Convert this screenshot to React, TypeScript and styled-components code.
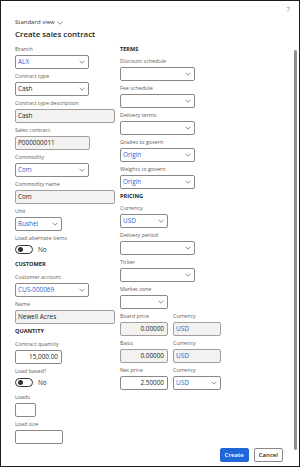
import React from "react";
import styled, { createGlobalStyle } from "styled-components";

const GlobalStyle = createGlobalStyle`
  body {
    margin: 0;
    font-family: "Open Sans", "Noto Sans", sans-serif;
    background: #ffffff;
  }
`;

const Dialog = styled.div`
  width: 300px;
  height: 467px;
  box-sizing: border-box;
  border: 1px solid #1b1b1b;
  background: #ffffff;
  position: relative;
  display: flex;
  flex-direction: column;
  overflow: hidden;
  color: #323130;
`;

const TopBar = styled.div`
  height: 15px;
  display: flex;
  justify-content: flex-end;
  padding-right: 9px;
`;

const Help = styled.span`
  font-size: 8px;
  line-height: 15px;
  color: #8a8886;
`;

const ViewSwitch = styled.div`
  margin: 2px 0 0 14px;
  height: 9px;
  font-size: 6px;
  line-height: 9px;
  color: #323130;
  display: flex;
  align-items: center;
  gap: 2px;
`;

const Title = styled.h1`
  margin: 1px 0 0 14px;
  font-size: 7.9px;
  line-height: 12px;
  font-weight: 600;
  color: #201f1e;
`;

const Form = styled.div`
  display: flex;
  margin-top: 5px;
  padding-left: 14px;
`;

const Column = styled.div<{ $width: number }>`
  width: ${(p) => p.$width}px;
  display: flex;
  flex-direction: column;
`;

const SectionHeader = styled.div<{ $gap: number }>`
  height: 9px;
  line-height: 9px;
  font-size: 5.6px;
  font-weight: 700;
  color: #201f1e;
  margin-bottom: ${(p) => p.$gap}px;
`;

const FieldWrap = styled.div`
  display: flex;
  flex-direction: column;
  margin-bottom: 3px;
`;

const Row = styled.div`
  display: flex;
  gap: 5px;
`;

const Label = styled.label`
  height: 9px;
  line-height: 9px;
  font-size: 5.4px;
  color: #605e5c;
  margin-bottom: 1px;
  white-space: nowrap;
`;

type BoxKind = "select" | "readonly" | "input";

const Box = styled.div<{ $width: number; $kind: BoxKind }>`
  width: ${(p) => p.$width}px;
  height: 14px;
  box-sizing: border-box;
  border: 1px solid ${(p) => (p.$kind === "readonly" ? "#a19f9d" : "#8a8886")};
  border-radius: 2px;
  background: ${(p) => (p.$kind === "readonly" ? "#f3f2f1" : "#ffffff")};
  display: flex;
  align-items: center;
  padding: 0 3px 0 2px;
`;

const Value = styled.span<{ $link?: boolean; $right?: boolean }>`
  font-size: 6.4px;
  line-height: 12px;
  color: ${(p) => (p.$link ? "#1f5fd6" : "#201f1e")};
  margin-left: ${(p) => (p.$right ? "auto" : "0")};
  white-space: nowrap;
`;

const ChevronSlot = styled.span`
  margin-left: auto;
  display: flex;
  align-items: center;
`;

const ToggleRow = styled.div`
  display: flex;
  align-items: center;
  gap: 5px;
  height: 9px;
  margin: 1px 0 6px;
`;

const Track = styled.span`
  width: 18px;
  height: 9px;
  box-sizing: border-box;
  border: 1px solid #323130;
  border-radius: 5px;
  display: flex;
  align-items: center;
  padding-left: 2px;
`;

const Knob = styled.span`
  width: 5px;
  height: 5px;
  border-radius: 50%;
  background: #323130;
`;

const ToggleText = styled.span`
  font-size: 6.4px;
  color: #323130;
`;

const Footer = styled.div`
  margin-top: auto;
  display: flex;
  justify-content: flex-end;
  gap: 5px;
  padding: 0 16px 4px 0;
`;

const Button = styled.button<{ $primary?: boolean }>`
  height: 14px;
  min-width: ${(p) => (p.$primary ? 28 : 29)}px;
  box-sizing: border-box;
  padding: 0 4px;
  border-radius: 2px;
  font-family: inherit;
  font-size: 6px;
  font-weight: 600;
  line-height: 12px;
  border: 1px solid ${(p) => (p.$primary ? "#1f66d6" : "#8a8886")};
  background: ${(p) => (p.$primary ? "#1f66d6" : "#ffffff")};
  color: ${(p) => (p.$primary ? "#ffffff" : "#201f1e")};
`;

const ScrollThumb = styled.div`
  position: absolute;
  right: 2px;
  top: 49px;
  width: 3px;
  height: 400px;
  border-radius: 2px;
  background: #8f8f8f;
`;

const Chevron = () => (
  <svg width="6" height="4" viewBox="0 0 6 4">
    <path d="M0.5 0.7 L3 3.2 L5.5 0.7" fill="none" stroke="#605e5c" strokeWidth="0.7" />
  </svg>
);

type FieldProps = {
  label: string;
  width: number;
  kind: BoxKind;
  value?: string;
  link?: boolean;
  numeric?: boolean;
};

const Field = ({ label, width, kind, value, link, numeric }: FieldProps) => (
  <FieldWrap>
    <Label>{label}</Label>
    <Box $width={width} $kind={kind}>
      {value && (
        <Value $link={link} $right={numeric}>
          {value}
        </Value>
      )}
      {kind === "select" && (
        <ChevronSlot>
          <Chevron />
        </ChevronSlot>
      )}
    </Box>
  </FieldWrap>
);

const Toggle = ({ label }: { label: string }) => (
  <>
    <Label>{label}</Label>
    <ToggleRow>
      <Track>
        <Knob />
      </Track>
      <ToggleText>No</ToggleText>
    </ToggleRow>
  </>
);

const App = () => {
  return (
    <>
      <GlobalStyle />
      <Dialog>
        <TopBar>
          <Help>?</Help>
        </TopBar>
        <ViewSwitch>
          Standard view <Chevron />
        </ViewSwitch>
        <Title>Create sales contract</Title>
        <Form>
          <Column $width={105}>
            <Field label="Branch" width={74} kind="select" value="ALX" link />
            <Field label="Contract type" width={74} kind="select" value="Cash" />
            <Field label="Contract type description" width={100} kind="readonly" value="Cash" />
            <Field label="Sales contract" width={75} kind="readonly" value="P000000011" />
            <Field label="Commodity" width={74} kind="select" value="Com" link />
            <Field label="Commodity name" width={100} kind="readonly" value="Com" />
            <Field label="Unit" width={47} kind="select" value="Bushel" link />
            <Toggle label="Load alternate items" />
            <SectionHeader $gap={4}>CUSTOMER</SectionHeader>
            <Field label="Customer account" width={74} kind="select" value="CUS-000069" link />
            <Field label="Name" width={100} kind="readonly" value="Newell Acres" />
            <SectionHeader $gap={4}>QUANTITY</SectionHeader>
            <Field label="Contract quantity" width={47} kind="input" value="15,000.00" numeric />
            <Toggle label="Load based?" />
            <Field label="Loads" width={21} kind="input" />
            <Field label="Load size" width={48} kind="input" />
          </Column>
          <Column $width={110}>
            <SectionHeader $gap={3}>TERMS</SectionHeader>
            <Field label="Discount schedule" width={75} kind="select" />
            <Field label="Fee schedule" width={75} kind="select" />
            <Field label="Delivery terms" width={75} kind="select" />
            <Field label="Grades to govern" width={75} kind="select" value="Origin" link />
            <Field label="Weights to govern" width={75} kind="select" value="Origin" link />
            <SectionHeader $gap={3}>PRICING</SectionHeader>
            <Field label="Currency" width={48} kind="select" value="USD" link />
            <Field label="Delivery period" width={75} kind="select" />
            <Field label="Ticker" width={75} kind="select" />
            <Field label="Market zone" width={48} kind="select" />
            <Row>
              <Field label="Board price" width={48} kind="readonly" value="0.00000" numeric />
              <Field label="Currency" width={48} kind="readonly" value="USD" link />
            </Row>
            <Row>
              <Field label="Basis" width={48} kind="readonly" value="0.00000" numeric />
              <Field label="Currency" width={48} kind="readonly" value="USD" link />
            </Row>
            <Row>
              <Field label="Net price" width={48} kind="input" value="2.50000" numeric />
              <Field label="Currency" width={48} kind="select" value="USD" link />
            </Row>
          </Column>
        </Form>
        <Footer>
          <Button $primary>Create</Button>
          <Button>Cancel</Button>
        </Footer>
        <ScrollThumb />
      </Dialog>
    </>
  );
};

export default App;
